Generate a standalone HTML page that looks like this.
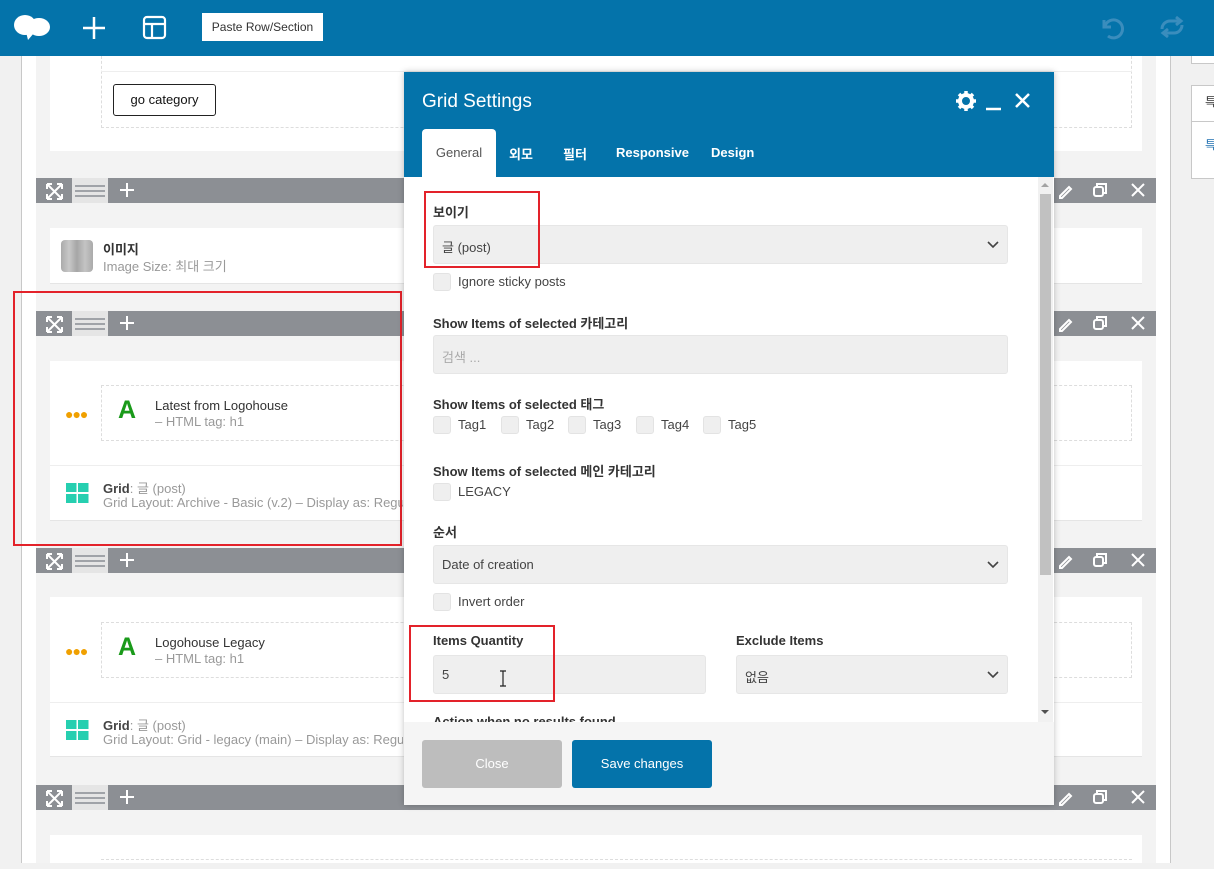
<!DOCTYPE html>
<html><head><meta charset="utf-8"><style>
*{box-sizing:border-box;margin:0;padding:0}
body{width:1214px;height:863px;overflow:hidden;position:relative;background:#f1f1f1;font-family:"Liberation Sans","Noto Sans CJK KR",sans-serif;font-size:13px;color:#333}
.a{position:absolute}
.bar{position:absolute;left:36px;width:1120px;height:25px;background:#8c8f94}
.bar .h{position:absolute;left:36px;top:0;width:36px;height:25px;background:#e5e5e5}
.bar .h i{position:absolute;left:3px;width:30px;height:2px;background:#a0a3a8}
.lbl{position:absolute;left:433px;font-weight:bold;font-size:13px;color:#333}
.inp{position:absolute;height:39px;background:#efefef;border:1px solid #e6e6e6;border-radius:3px;font-size:13px;color:#444;padding:11px 8px}
.cb{position:absolute;width:18px;height:18px;background:#efefef;border:1px solid #e3e3e3;border-radius:3px}
.ct{position:absolute;font-size:13px;color:#444}
.chev{position:absolute;right:8px;top:12px}
.red{position:absolute;border:2px solid #e3222a}
.A{position:absolute;left:118px;color:#1a9a1a;font-size:25px;font-weight:bold;font-family:"Liberation Sans",sans-serif}
</style></head><body>
<div class="a" style="left:21px;top:56px;width:1px;height:807px;background:#c8c8c8"></div>
<div class="a" style="left:22px;top:56px;width:1148px;height:807px;background:#fff"></div>
<div class="a" style="left:1170px;top:56px;width:1px;height:807px;background:#c8c8c8"></div>
<div class="a" style="left:36px;top:56px;width:1120px;height:807px;background:#f3f3f3"></div>
<div class="a" style="left:1191px;top:40px;width:30px;height:24px;background:#fff;border:1px solid #c8c8c8;border-top:none"></div>
<div class="a" style="left:1191px;top:85px;width:30px;height:94px;background:#fff;border:1px solid #c8c8c8"></div>
<div class="a" style="left:1191px;top:121px;width:30px;height:1px;background:#c8c8c8"></div>
<div class="a" style="left:1205px;top:93px;font-size:12px;color:#333">특</div>
<div class="a" style="left:1205px;top:136px;font-size:12px;color:#2271b1">특</div>

<div class="a" style="left:50px;top:56px;width:1092px;height:95px;background:#fff"></div>
<div class="a" style="left:101px;top:56px;width:1031px;height:72px;border:1px dashed #ddd;border-top:none"></div>
<div class="a" style="left:101px;top:71px;width:1031px;height:1px;background:#eee"></div>
<div class="a" style="left:113px;top:84px;width:103px;height:32px;border:1px solid #222;border-radius:3px;background:#fff;font-size:13px;color:#111;text-align:center;line-height:30px">go category</div>

<div class="bar" style="top:178px"><div class="h"><i style="top:7px"></i><i style="top:12px"></i><i style="top:17px"></i></div></div>
<div class="bar" style="top:311px"><div class="h"><i style="top:7px"></i><i style="top:12px"></i><i style="top:17px"></i></div></div>
<div class="bar" style="top:548px"><div class="h"><i style="top:7px"></i><i style="top:12px"></i><i style="top:17px"></i></div></div>
<div class="bar" style="top:785px"><div class="h"><i style="top:7px"></i><i style="top:12px"></i><i style="top:17px"></i></div></div>
<svg class="a" style="left:0;top:0" width="1214" height="863">
<g fill="none" stroke="#fff" stroke-width="2">
<g id="ic"><path d="M48 185l13 13M61 185l-13 13M47 184h5M47 184v5M62 184h-5M62 184v5M47 199h5M47 199v-5M62 199h-5M62 199v-5"/><path d="M127 183v14M120 190h14"/>
<path d="M1060 196l9-9 2 2-9 9h-2z"/><rect x="1094" y="187" width="9" height="9" rx="2"/><path d="M1097 186v-2h9v9h-2"/><path d="M1132 184l12 12M1144 184l-12 12"/></g>
<use href="#ic" y="133"/><use href="#ic" y="370"/><use href="#ic" y="607"/>
</g>
</svg>

<div class="a" style="left:50px;top:228px;width:1092px;height:56px;background:#fff;border-bottom:1px solid #e5e5e5"></div>
<div class="a" style="left:61px;top:240px;width:32px;height:32px;border-radius:4px;background:linear-gradient(90deg,#aaa,#c8c8c8,#a6a6a6,#c4c4c4,#aaa)"></div>
<div class="a" style="left:103px;top:239px;font-size:13px;font-weight:bold;color:#333">이미지</div>
<div class="a" style="left:103px;top:256px;font-size:13px;color:#999">Image Size: 최대 크기</div>

<div class="a" style="left:50px;top:361px;width:1092px;height:160px;background:#fff;border-bottom:1px solid #e5e5e5"></div>
<div class="a" style="left:101px;top:385px;width:1031px;height:56px;border:1px dashed #ddd"></div>
<div class="a" style="left:50px;top:465px;width:1092px;height:1px;background:#eee"></div>
<div class="a" style="left:65px;top:406px;color:#f0a000;font-size:14px;letter-spacing:-1px">●●●</div>
<div class="A" style="top:396px">A</div>
<div class="a" style="left:155px;top:398px;font-size:13px;color:#333">Latest from Logohouse</div>
<div class="a" style="left:155px;top:414px;font-size:13px;color:#999">– HTML tag: h1</div>
<svg class="a" style="left:66px;top:483px" width="23" height="20"><rect x="0" y="0" width="10.5" height="9" fill="#26cfb0"/><rect x="12" y="0" width="10.5" height="9" fill="#26cfb0"/><rect x="0" y="11" width="10.5" height="9" fill="#26cfb0"/><rect x="12" y="11" width="10.5" height="9" fill="#26cfb0"/></svg>
<div class="a" style="left:103px;top:478px;font-size:13px;color:#999"><b style="color:#444">Grid</b>: 글 (post)</div>
<div class="a" style="left:103px;top:495px;font-size:13px;color:#999;white-space:nowrap;width:300px;overflow:hidden">Grid Layout: Archive - Basic (v.2) – Display as: Regular</div>

<div class="a" style="left:50px;top:597px;width:1092px;height:160px;background:#fff;border-bottom:1px solid #e5e5e5"></div>
<div class="a" style="left:101px;top:622px;width:1031px;height:56px;border:1px dashed #ddd"></div>
<div class="a" style="left:50px;top:702px;width:1092px;height:1px;background:#eee"></div>
<div class="a" style="left:65px;top:643px;color:#f0a000;font-size:14px;letter-spacing:-1px">●●●</div>
<div class="A" style="top:633px">A</div>
<div class="a" style="left:155px;top:635px;font-size:13px;color:#333">Logohouse Legacy</div>
<div class="a" style="left:155px;top:651px;font-size:13px;color:#999">– HTML tag: h1</div>
<svg class="a" style="left:66px;top:720px" width="23" height="20"><rect x="0" y="0" width="10.5" height="9" fill="#26cfb0"/><rect x="12" y="0" width="10.5" height="9" fill="#26cfb0"/><rect x="0" y="11" width="10.5" height="9" fill="#26cfb0"/><rect x="12" y="11" width="10.5" height="9" fill="#26cfb0"/></svg>
<div class="a" style="left:103px;top:715px;font-size:13px;color:#999"><b style="color:#444">Grid</b>: 글 (post)</div>
<div class="a" style="left:103px;top:732px;font-size:13px;color:#999;white-space:nowrap;width:300px;overflow:hidden">Grid Layout: Grid - legacy (main) – Display as: Regular</div>

<div class="a" style="left:50px;top:835px;width:1092px;height:28px;background:#fff"></div>
<div class="a" style="left:101px;top:859px;width:1031px;height:10px;border-top:1px dashed #ddd"></div>

<div class="red" style="left:13px;top:291px;width:389px;height:255px"></div>

<div class="a" style="left:0;top:0;width:1214px;height:56px;background:#0473aa"></div>
<svg class="a" style="left:12px;top:10px" width="40" height="32"><ellipse cx="13" cy="15" rx="11" ry="10" fill="#fff"/><ellipse cx="27" cy="17" rx="11" ry="9" fill="#fff"/><path d="M14 22l2 8 6-7z" fill="#fff"/></svg>
<svg class="a" style="left:82px;top:16px" width="24" height="24"><path d="M12 1v22M1 12h22" stroke="#fff" stroke-width="2.5"/></svg>
<svg class="a" style="left:142px;top:15px" width="25" height="25"><rect x="2" y="2" width="21" height="21" rx="3" fill="none" stroke="#fff" stroke-width="2.2"/><path d="M2 9h21M10 9v14" stroke="#fff" stroke-width="2.2"/></svg>
<div class="a" style="left:202px;top:13px;width:121px;height:28px;background:#fff;font-size:12px;color:#333;line-height:28px;text-align:center">Paste Row/Section</div>
<svg class="a" style="left:1097px;top:14px" width="28" height="26"><path d="M7 6v7h7" fill="none" stroke="#3a8dbd" stroke-width="3"/><path d="M8 12a9 9 0 1 1 3 10" fill="none" stroke="#3a8dbd" stroke-width="3"/></svg>
<svg class="a" style="left:1158px;top:14px" width="28" height="26"><path d="M4 15a8 8 0 0 1 8-8h10M18 3l5 4-5 4M24 11a8 8 0 0 1-8 8H6M10 15l-5 4 5 4" fill="none" stroke="#3a8dbd" stroke-width="3"/></svg>

<div class="a" style="left:404px;top:72px;width:650px;height:733px;background:#fff;box-shadow:0 0 6px rgba(0,0,0,.25)"></div>
<div class="a" style="left:404px;top:72px;width:650px;height:105px;background:#0473aa"></div>
<div class="a" style="left:422px;top:91px;font-size:19px;color:#fff">Grid Settings</div>
<svg class="a" style="left:955px;top:90px" width="80" height="22">
<circle cx="11" cy="11" r="6" fill="none" stroke="#fff" stroke-width="4"/><g stroke="#fff" stroke-width="3.5"><path d="M11 1v4M11 17v4M1 11h4M17 11h4M4 4l3 3M15 15l3 3M18 4l-3 3M4 18l3-3"/></g>
<path d="M31 19h15" stroke="#fff" stroke-width="2.5"/><path d="M61 4l13 13M74 4l-13 13" stroke="#fff" stroke-width="2.5"/></svg>
<div class="a" style="left:422px;top:129px;width:74px;height:48px;background:#fff;border-radius:4px 4px 0 0;color:#555;font-size:13px;text-align:center;line-height:48px">General</div>
<div class="a" style="left:509px;top:144px;color:#fff;font-size:13px;font-weight:bold">외모</div>
<div class="a" style="left:563px;top:144px;color:#fff;font-size:13px;font-weight:bold">필터</div>
<div class="a" style="left:616px;top:145px;color:#fff;font-size:13px;font-weight:bold">Responsive</div>
<div class="a" style="left:711px;top:145px;color:#fff;font-size:13px;font-weight:bold">Design</div>

<div class="a" style="left:1038px;top:177px;width:15px;height:545px;background:#f1f1f1"></div>
<div class="a" style="left:1040px;top:194px;width:11px;height:381px;background:#c1c1c1"></div>
<div class="a" style="left:1041px;top:183px;width:0;height:0;border:4px solid transparent;border-bottom-color:#a3a3a3;border-top:none"></div>
<div class="a" style="left:1041px;top:710px;width:0;height:0;border:4px solid transparent;border-top-color:#505050;border-bottom:none"></div>

<div class="lbl" style="top:202px">보이기</div>
<div class="inp" style="left:433px;top:225px;width:575px">글 (post)<svg class="chev" width="12" height="14"><path d="M1 4l5 5 5-5" fill="none" stroke="#444" stroke-width="1.6"/></svg></div>
<div class="cb" style="left:433px;top:273px"></div><div class="ct" style="left:458px;top:274px">Ignore sticky posts</div>

<div class="lbl" style="top:313px">Show Items of selected 카테고리</div>
<div class="inp" style="left:433px;top:335px;width:575px;color:#aaa">검색 ...</div>

<div class="lbl" style="top:394px">Show Items of selected 태그</div>
<div class="cb" style="left:433px;top:416px"></div><div class="ct" style="left:458px;top:417px">Tag1</div>
<div class="cb" style="left:501px;top:416px"></div><div class="ct" style="left:526px;top:417px">Tag2</div>
<div class="cb" style="left:568px;top:416px"></div><div class="ct" style="left:593px;top:417px">Tag3</div>
<div class="cb" style="left:636px;top:416px"></div><div class="ct" style="left:661px;top:417px">Tag4</div>
<div class="cb" style="left:703px;top:416px"></div><div class="ct" style="left:728px;top:417px">Tag5</div>

<div class="lbl" style="top:461px">Show Items of selected 메인 카테고리</div>
<div class="cb" style="left:433px;top:483px"></div><div class="ct" style="left:458px;top:484px">LEGACY</div>

<div class="lbl" style="top:522px">순서</div>
<div class="inp" style="left:433px;top:545px;width:575px">Date of creation<svg class="chev" width="12" height="14"><path d="M1 4l5 5 5-5" fill="none" stroke="#444" stroke-width="1.6"/></svg></div>
<div class="cb" style="left:433px;top:593px"></div><div class="ct" style="left:458px;top:594px">Invert order</div>

<div class="lbl" style="top:633px">Items Quantity</div>
<div class="lbl" style="left:736px;top:633px">Exclude Items</div>
<div class="inp" style="left:433px;top:655px;width:273px">5</div>
<svg class="a" style="left:498px;top:670px" width="10" height="18"><path d="M2 1h6M5 1v15M2 16h6" stroke="#222" stroke-width="1.2" fill="none"/></svg>
<div class="inp" style="left:736px;top:655px;width:272px">없음<svg class="chev" width="12" height="14"><path d="M1 4l5 5 5-5" fill="none" stroke="#444" stroke-width="1.6"/></svg></div>
<div class="lbl" style="top:714px;height:8px;overflow:hidden">Action when no results found</div>

<div class="red" style="left:424px;top:191px;width:116px;height:77px"></div>
<div class="red" style="left:409px;top:625px;width:146px;height:77px"></div>

<div class="a" style="left:404px;top:722px;width:650px;height:83px;background:#f5f5f5"></div>
<div class="a" style="left:422px;top:740px;width:140px;height:48px;background:#bdbdbd;border-radius:3px;color:#fff;font-size:13px;text-align:center;line-height:48px">Close</div>
<div class="a" style="left:572px;top:740px;width:140px;height:48px;background:#0473aa;border-radius:3px;color:#fff;font-size:13px;text-align:center;line-height:48px">Save changes</div>
</body></html>
